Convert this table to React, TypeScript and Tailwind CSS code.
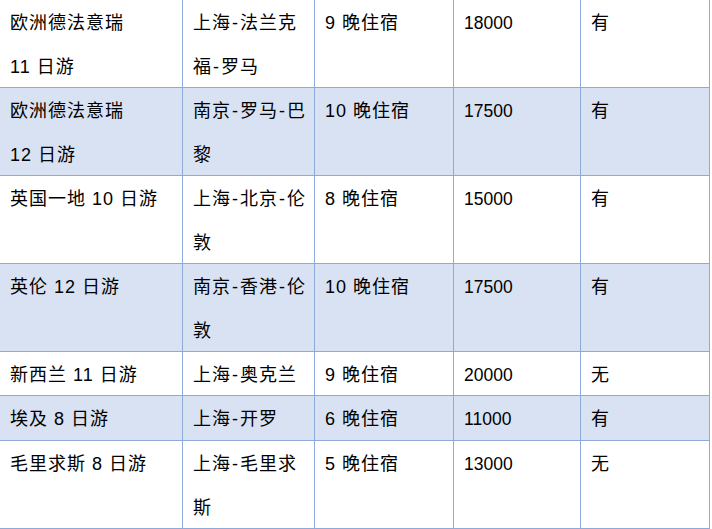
import React from 'react';

type Row = {
  name: string[];
  route: string[];
  nights: string;
  price: string;
  extra: string;
  shaded: boolean;
  height: string;
};

const rows: Row[] = [
  { name: ['欧洲德法意瑞', '11 日游'], route: ['上海-法兰克', '福-罗马'], nights: '9 晚住宿', price: '18000', extra: '有', shaded: false, height: 'h-[88px]' },
  { name: ['欧洲德法意瑞', '12 日游'], route: ['南京-罗马-巴', '黎'], nights: '10 晚住宿', price: '17500', extra: '有', shaded: true, height: 'h-[88px]' },
  { name: ['英国一地 10 日游'], route: ['上海-北京-伦', '敦'], nights: '8 晚住宿', price: '15000', extra: '有', shaded: false, height: 'h-[88px]' },
  { name: ['英伦 12 日游'], route: ['南京-香港-伦', '敦'], nights: '10 晚住宿', price: '17500', extra: '有', shaded: true, height: 'h-[88px]' },
  { name: ['新西兰 11 日游'], route: ['上海-奥克兰'], nights: '9 晚住宿', price: '20000', extra: '无', shaded: false, height: 'h-[44px]' },
  { name: ['埃及 8 日游'], route: ['上海-开罗'], nights: '6 晚住宿', price: '11000', extra: '有', shaded: true, height: 'h-[45px]' },
  { name: ['毛里求斯 8 日游'], route: ['上海-毛里求', '斯'], nights: '5 晚住宿', price: '13000', extra: '无', shaded: false, height: 'h-[88px]' },
];

// Word puts a little space around the hyphen between CJK text
const Line: React.FC<{ text: string }> = ({ text }) => {
  const parts = text.split('-');
  return (
    <div className="h-[44px] leading-[46px] whitespace-nowrap">
      {parts.map((p, i) => (
        <React.Fragment key={i}>
          {i > 0 && <span className="mx-[1px]">-</span>}
          {p}
        </React.Fragment>
      ))}
    </div>
  );
};

const Cell: React.FC<{ lines: string[]; width: string; numeric?: boolean }> = ({ lines, width, numeric }) => (
  <div
    className={`${width} shrink-0 border-r border-[#8eaadb] pl-[10px] ${
      numeric ? 'tracking-normal text-[17.5px]' : 'tracking-[1px]'
    }`}
  >
    {lines.map((l, i) => (
      <Line key={i} text={l} />
    ))}
  </div>
);

export default function App() {
  return (
    <div
      className="w-[712px] h-[529px] bg-white text-black overflow-hidden text-[18px]"
      style={{ fontFamily: '"Liberation Sans", "Noto Sans CJK SC", sans-serif' }}
    >
      <div className="w-[710px]">
        {rows.map((r, i) => (
          <div
            key={i}
            className={`flex ${r.height} border-b border-[#8eaadb] ${r.shaded ? 'bg-[#d9e2f3]' : 'bg-white'}`}
          >
            <Cell lines={r.name} width="w-[183px]" />
            <Cell lines={r.route} width="w-[132px]" />
            <Cell lines={[r.nights]} width="w-[139px]" />
            <Cell lines={[r.price]} width="w-[127px]" numeric />
            <Cell lines={[r.extra]} width="w-[129px]" />
          </div>
        ))}
      </div>
    </div>
  );
}
